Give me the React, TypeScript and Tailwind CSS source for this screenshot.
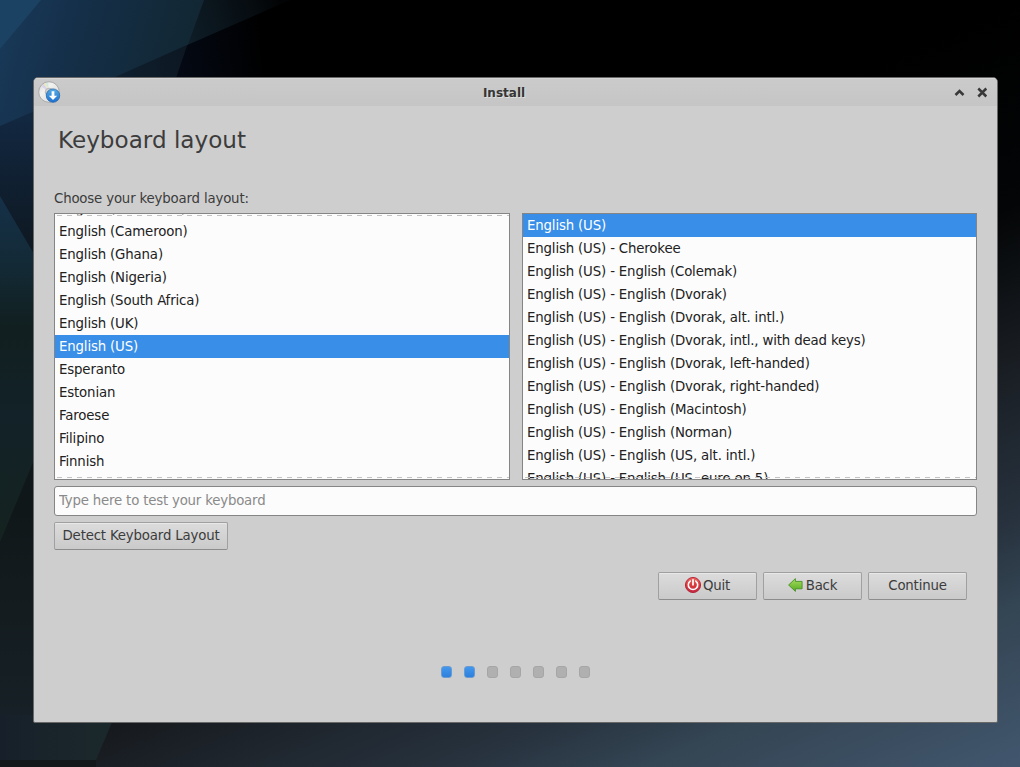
import React from "react";

const languages = [
  "English (Australian)",
  "English (Cameroon)",
  "English (Ghana)",
  "English (Nigeria)",
  "English (South Africa)",
  "English (UK)",
  "English (US)",
  "Esperanto",
  "Estonian",
  "Faroese",
  "Filipino",
  "Finnish",
];

const variants = [
  "English (US)",
  "English (US) - Cherokee",
  "English (US) - English (Colemak)",
  "English (US) - English (Dvorak)",
  "English (US) - English (Dvorak, alt. intl.)",
  "English (US) - English (Dvorak, intl., with dead keys)",
  "English (US) - English (Dvorak, left-handed)",
  "English (US) - English (Dvorak, right-handed)",
  "English (US) - English (Macintosh)",
  "English (US) - English (Norman)",
  "English (US) - English (US, alt. intl.)",
  "English (US) - English (US, euro on 5)",
];

function Wallpaper() {
  return (
    <svg className="absolute inset-0" width="1020" height="767" viewBox="0 0 1020 767">
      <defs>
        <linearGradient id="base" gradientUnits="userSpaceOnUse" x1="0" y1="0" x2="445" y2="1024">
          <stop offset="0.36" stopColor="#000000" />
          <stop offset="0.53" stopColor="#030506" />
          <stop offset="0.65" stopColor="#181c21" />
          <stop offset="0.79" stopColor="#27323e" />
          <stop offset="0.86" stopColor="#344553" />
          <stop offset="1" stopColor="#42576f" />
        </linearGradient>
        <linearGradient id="glow" gradientUnits="userSpaceOnUse" x1="0" y1="0" x2="190" y2="50">
          <stop offset="0" stopColor="#193a5a" />
          <stop offset="0.35" stopColor="#15304b" />
          <stop offset="1" stopColor="#122733" />
        </linearGradient>
        <linearGradient id="fade" gradientUnits="userSpaceOnUse" x1="185" y1="30" x2="280" y2="0">
          <stop offset="0" stopColor="#0e1d27" />
          <stop offset="0.75" stopColor="#060b0f" />
          <stop offset="1" stopColor="#020304" />
        </linearGradient>
        <linearGradient id="night" gradientUnits="userSpaceOnUse" x1="176" y1="60" x2="265" y2="50">
          <stop offset="0" stopColor="#040914" />
          <stop offset="1" stopColor="#000000" />
        </linearGradient>
        <linearGradient id="navy" gradientUnits="userSpaceOnUse" x1="110" y1="60" x2="187" y2="50">
          <stop offset="0" stopColor="#10202f" />
          <stop offset="1" stopColor="#0c1722" />
        </linearGradient>
        <linearGradient id="left" gradientUnits="userSpaceOnUse" x1="0" y1="120" x2="0" y2="767">
          <stop offset="0" stopColor="#122740" />
          <stop offset="0.2" stopColor="#0e1821" />
          <stop offset="0.6" stopColor="#101719" />
          <stop offset="0.72" stopColor="#131b1e" />
          <stop offset="1" stopColor="#182229" />
        </linearGradient>
        <linearGradient id="teal" gradientUnits="userSpaceOnUse" x1="0" y1="196" x2="0" y2="540">
          <stop offset="0" stopColor="#153048" />
          <stop offset="0.2" stopColor="#132a36" />
          <stop offset="0.38" stopColor="#111f20" />
          <stop offset="0.65" stopColor="#132228" />
          <stop offset="1" stopColor="#14221f" />
        </linearGradient>
        <linearGradient id="foot" gradientUnits="userSpaceOnUse" x1="0" y1="740" x2="105" y2="740">
          <stop offset="0" stopColor="#17202a" />
          <stop offset="1" stopColor="#1b282b" />
        </linearGradient>
      </defs>
      <rect width="1020" height="767" fill="url(#base)" />
      <polygon points="170,52 290,0 265,10 265,90 170,90" fill="url(#night)" />
      <polygon points="0,120 189,40 174,84 0,190" fill="url(#navy)" />
      <polygon points="0,126 60,100 60,767 0,767" fill="url(#left)" />
      <polygon points="200,0 290,0 185,46" fill="url(#fade)" />
      <polygon points="0,0 204,0 188,44.5 115,77 0,126" fill="url(#glow)" />
      <polygon points="0,0 41,0 0,49" fill="#1b4262" />
      <polygon points="0,196 34,254 34,460 0,542" fill="url(#teal)" />
      <polygon points="0,715 115,715 96,760 0,760" fill="url(#foot)" />
      <rect y="760" width="96" height="7" fill="#14181b" />
    </svg>
  );
}

function DiscIcon() {
  return (
    <svg className="mt-[3px] ml-1 shrink-0" width="24" height="24" viewBox="0 0 24 24">
      <defs>
        <linearGradient id="disc" x1="0" y1="0" x2="1" y2="1">
          <stop offset="0" stopColor="#d4d4d4" />
          <stop offset="0.35" stopColor="#f2f2f0" />
          <stop offset="1" stopColor="#d6d6d6" />
        </linearGradient>
        <linearGradient id="badge" x1="0" y1="0" x2="0" y2="1">
          <stop offset="0" stopColor="#58aee4" />
          <stop offset="1" stopColor="#1c6fd0" />
        </linearGradient>
      </defs>
      <circle cx="11" cy="11" r="10.3" fill="url(#disc)" stroke="#a6a6a6" strokeWidth="0.9" />
      <path d="M11 11 3.5 5.5 6 3Z" fill="#d8d2f0" />
      <path d="M11 11 6 3 8 2Z" fill="#f0e6b8" />
      <path d="M11 11 8 2 10 1.7Z" fill="#c9ece2" />
      <circle cx="11" cy="11" r="3.8" fill="#d0d0d0" stroke="#b0b0b0" strokeWidth="0.8" />
      <circle cx="15" cy="14.6" r="6.7" fill="url(#badge)" stroke="#2867ab" strokeWidth="0.8" />
      <path d="M13.6 10.2h2.8v4.5h2.8L15 19 10.8 14.7h2.8Z" fill="#fff" />
    </svg>
  );
}

function PowerIcon() {
  return (
    <svg className="relative -top-px -left-px shrink-0" width="18" height="18" viewBox="0 0 18 18">
      <defs>
        <linearGradient id="power" x1="0" y1="0" x2="0" y2="1">
          <stop offset="0" stopColor="#ec6a62" />
          <stop offset="0.5" stopColor="#d9393c" />
          <stop offset="1" stopColor="#c12a45" />
        </linearGradient>
      </defs>
      <circle cx="9" cy="9" r="7.6" fill="url(#power)" stroke="#b31f35" strokeWidth="0.9" />
      <path d="M6.2 5.1a4.7 4.7 0 1 0 5.6 0" fill="none" stroke="#fff" strokeWidth="1.6" strokeLinecap="round" />
      <path d="M9 3.8v5" stroke="#fff" strokeWidth="1.7" strokeLinecap="round" />
    </svg>
  );
}

function BackIcon() {
  return (
    <svg className="relative -top-px -left-px shrink-0" width="18" height="18" viewBox="0 0 18 18">
      <defs>
        <linearGradient id="arrow" x1="0" y1="0" x2="0" y2="1">
          <stop offset="0" stopColor="#a9dc62" />
          <stop offset="1" stopColor="#55ac1e" />
        </linearGradient>
      </defs>
      <path d="M1.6 9 8.4 2.6V5.4h6.7v7.4H8.4v2.6Z" fill="url(#arrow)" stroke="#488f25" strokeWidth="0.9" strokeLinejoin="round" />
    </svg>
  );
}

type ListProps = { items: string[]; selected: number; scrolled?: boolean };

function ListBox({ items, selected, scrolled = false }: ListProps) {
  return (
    <div className="relative h-[267px] overflow-hidden border border-[#858585] bg-[#fcfcfc]">
      <div className={scrolled ? "-mt-[17px]" : ""}>
        {items.map((item, i) => (
          <div
            key={item}
            className={
              i === selected
                ? "h-[23px] bg-[#398ee7] px-1 leading-[23px] whitespace-nowrap text-white"
                : "h-[23px] px-1 leading-[23px] whitespace-nowrap text-[#212121]"
            }
          >
            {item}
          </div>
        ))}
      </div>
      {scrolled && (
        <div className="absolute top-px right-0 left-[2px] h-px bg-[repeating-linear-gradient(90deg,#c3c3c3_0_5px,#fcfcfc_5px_10px)]" />
      )}
      <div className="absolute right-0 bottom-px left-[2px] h-px bg-[repeating-linear-gradient(90deg,#c3c3c3_0_5px,transparent_5px_10px)]" />
    </div>
  );
}

function Button({ children, className }: { children: React.ReactNode; className: string }) {
  return (
    <button
      className={
        "flex h-7 items-center justify-center rounded-[2px] border border-[#a0a0a0] border-b-[#8c8c8c] bg-linear-to-b from-[#dcdcdc] to-[#cacaca] leading-none tracking-[-0.18px] whitespace-nowrap text-[#3c3c3c] shadow-[inset_0_1px_0_#e8e8e8] " +
        className
      }
    >
      {children}
    </button>
  );
}

export default function App() {
  return (
    <div className="relative h-[767px] w-[1020px] overflow-hidden bg-black pt-[77px] pl-[33px] font-['DejaVu_Sans',sans-serif] text-[13.333px] tracking-[-0.16px] text-[#3c3c3c]">
      <Wallpaper />
      <main className="relative flex h-[646px] w-[965px] flex-col overflow-hidden rounded-t-[5px] rounded-b-[2px] border border-[#686868] bg-[#cecece]">
        <header className="flex h-7 shrink-0 bg-linear-to-b from-[#cbcbcb] to-[#c5c5c5] shadow-[inset_0_1px_0_#d6d6d6]">
          <DiscIcon />
          <h1 className="flex-1 pr-[7px] text-center text-[12px] leading-[30px] font-bold tracking-normal text-[#353535] [text-shadow:1px_1px_0_#dedede]">
            Install
          </h1>
          <svg className="mt-2 mr-2" width="36" height="14" viewBox="0 0 36 14">
            <path d="m2.5 9 4-4 4 4M25.3 2.5l8 8m0-8-8 8" fill="none" stroke="#383838" strokeWidth="2.5" />
          </svg>
        </header>
        <h2 className="mt-[18px] ml-6 h-8 text-[23.1px] leading-8 tracking-normal">Keyboard layout</h2>
        <section className="mt-[34px] ml-5 w-[923px]">
          <p className="h-5 leading-[18px] tracking-[-0.18px]">Choose your keyboard layout:</p>
          <div className="mt-[3px] grid grid-cols-[456px_455px] gap-3">
            <ListBox items={languages} selected={6} scrolled />
            <ListBox items={variants} selected={0} />
          </div>
          <input
            className="mt-[6px] block h-[30px] w-full rounded-[3px] border border-[#858585] bg-[#fcfcfc] px-1 pb-px tracking-[-0.2px] outline-none placeholder:text-[#8a8a8a]"
            placeholder="Type here to test your keyboard"
          />
          <Button className="mt-[6px] w-[174px]">Detect Keyboard Layout</Button>
        </section>
        <div className="mt-[22px] mr-[30px] flex justify-end gap-[6px]">
          <Button className="w-[99px]">
            <PowerIcon />
            Quit
          </Button>
          <Button className="w-[99px]">
            <BackIcon />
            Back
          </Button>
          <Button className="w-[99px]">Continue</Button>
        </div>
        <div className="mt-[66px] flex justify-center gap-3">
          {[0, 1, 2, 3, 4, 5, 6].map((n) => (
            <span
              key={n}
              className={
                n < 2
                  ? "h-3 w-[11px] rounded-[3px] border border-[#6a9bd0] bg-linear-to-b from-[#4297ed] to-[#2d80dc]"
                  : "h-3 w-[11px] rounded-[3px] border border-[#a6a6a6] bg-[#b0b0b0]"
              }
            />
          ))}
        </div>
      </main>
    </div>
  );
}
